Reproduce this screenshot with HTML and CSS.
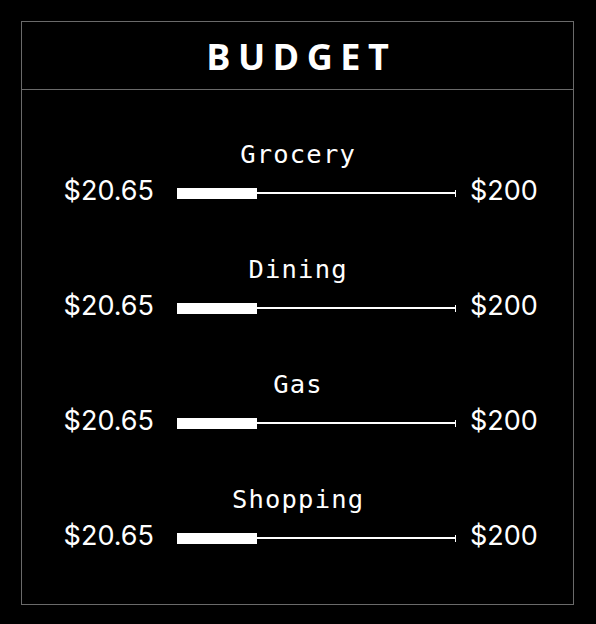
FILE: index.html
```html
<!DOCTYPE html>
<html>
<head>
<meta charset="utf-8">
<link rel="stylesheet" href="styles.css">
</head>
<body>
<div class="card">
  <div class="header"><h1 class="title">BUDGET</h1></div>
  <div class="list">
    <div class="item">
      <div class="label">Grocery</div>
      <div class="row">
        <span class="amt spent">$20.65</span>
        <div class="bar"><div class="fill" style="width:28.6%"></div><div class="track"></div><div class="tick"></div></div>
        <span class="amt limit">$200</span>
      </div>
    </div>
    <div class="item">
      <div class="label">Dining</div>
      <div class="row">
        <span class="amt spent">$20.65</span>
        <div class="bar"><div class="fill" style="width:28.6%"></div><div class="track"></div><div class="tick"></div></div>
        <span class="amt limit">$200</span>
      </div>
    </div>
    <div class="item">
      <div class="label">Gas</div>
      <div class="row">
        <span class="amt spent">$20.65</span>
        <div class="bar"><div class="fill" style="width:28.6%"></div><div class="track"></div><div class="tick"></div></div>
        <span class="amt limit">$200</span>
      </div>
    </div>
    <div class="item">
      <div class="label">Shopping</div>
      <div class="row">
        <span class="amt spent">$20.65</span>
        <div class="bar"><div class="fill" style="width:28.6%"></div><div class="track"></div><div class="tick"></div></div>
        <span class="amt limit">$200</span>
      </div>
    </div>
  </div>
</div>
</body>
</html>
```
FILE: styles.css
```css
html, body {
  margin: 0;
  padding: 0;
  background: #000;
  color: #fff;
}
body {
  padding: 21px;
}
.card {
  width: 551px;
  height: 582px;
  border: 1px solid #6a6a6a;
}
.header {
  height: 67px;
  border-bottom: 1px solid #6a6a6a;
  display: flex;
  align-items: center;
  justify-content: center;
}
.title {
  margin: 0;
  margin-top: 3px;
  font-family: "Open Sans", sans-serif;
  font-weight: 700;
  font-size: 36px;
  letter-spacing: 7.5px;
  padding-left: 7.5px;
  line-height: 1;
}
.list {
  padding-top: 49px;
  display: flex;
  flex-direction: column;
  gap: 48px;
}
.item {
  display: flex;
  flex-direction: column;
  gap: 7px;
}
.label {
  text-align: center;
  font-family: "DejaVu Sans Mono", monospace;
  font-size: 25.5px;
  letter-spacing: 1.2px;
  padding-left: 1.2px;
  line-height: 30px;
  height: 30px;
}
.row {
  display: flex;
  align-items: center;
  height: 30px;
}
.amt {
  font-family: Inter, sans-serif;
  font-weight: 400;
  font-size: 27px;
  line-height: 30px;
}
.spent {
  width: 132px;
  text-align: right;
  padding-right: 23px;
  box-sizing: content-box;
}
.limit {
  padding-left: 14px;
}
.bar {
  width: 279px;
  height: 12px;
  margin-top: 4px;
  display: flex;
  align-items: center;
}
.fill {
  height: 11px;
  background: #fff;
  flex: none;
}
.track {
  flex: 1;
  height: 1.5px;
  background: #fff;
}
.tick {
  width: 1.5px;
  height: 7px;
  background: #fff;
}
```
